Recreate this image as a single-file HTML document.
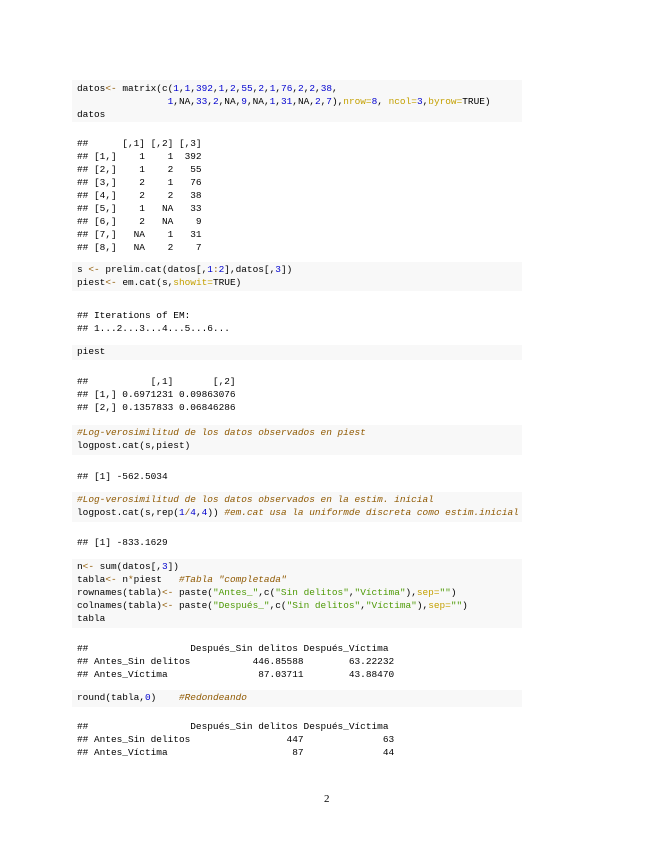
<!DOCTYPE html>
<html><head><meta charset="utf-8"><style>
body{margin:0;width:655px;height:848px;background:#fff;position:relative;overflow:hidden}
pre{margin:0;position:absolute;left:77px;font-family:"Liberation Mono",monospace;font-size:9.45px;line-height:13px;white-space:pre;color:#000}
.bg{position:absolute;left:72px;width:450px;background:#f8f8f8}
.n{color:#0000cf}.s{color:#4e9a06}.a{color:#c4a000}.o{color:#8f5902}.c{color:#8f5902;font-style:italic}
.pg{position:absolute;left:324px;top:793px;font-family:"Liberation Serif",serif;font-size:11px}
</style></head><body>
<div class="bg" style="top:80px;height:42px"></div>
<div class="bg" style="top:262px;height:29px"></div>
<div class="bg" style="top:345px;height:15px"></div>
<div class="bg" style="top:425px;height:30px"></div>
<div class="bg" style="top:492px;height:30px"></div>
<div class="bg" style="top:559px;height:69px"></div>
<div class="bg" style="top:690px;height:17px"></div>

<pre style="top:82px">datos<span class="o">&lt;-</span> matrix(c(<span class="n">1</span>,<span class="n">1</span>,<span class="n">392</span>,<span class="n">1</span>,<span class="n">2</span>,<span class="n">55</span>,<span class="n">2</span>,<span class="n">1</span>,<span class="n">76</span>,<span class="n">2</span>,<span class="n">2</span>,<span class="n">38</span>,
                <span class="n">1</span>,NA,<span class="n">33</span>,<span class="n">2</span>,NA,<span class="n">9</span>,NA,<span class="n">1</span>,<span class="n">31</span>,NA,<span class="n">2</span>,<span class="n">7</span>),<span class="a">nrow=</span><span class="n">8</span>, <span class="a">ncol=</span><span class="n">3</span>,<span class="a">byrow=</span>TRUE)
datos</pre>

<pre style="top:137px">##      [,1] [,2] [,3]
## [1,]    1    1  392
## [2,]    1    2   55
## [3,]    2    1   76
## [4,]    2    2   38
## [5,]    1   NA   33
## [6,]    2   NA    9
## [7,]   NA    1   31
## [8,]   NA    2    7</pre>

<pre style="top:263px">s <span class="o">&lt;-</span> prelim.cat(datos[,<span class="n">1</span><span class="o">:</span><span class="n">2</span>],datos[,<span class="n">3</span>])
piest<span class="o">&lt;-</span> em.cat(s,<span class="a">showit=</span>TRUE)</pre>

<pre style="top:309px">## Iterations of EM: 
## 1...2...3...4...5...6...</pre>

<pre style="top:345px">piest</pre>

<pre style="top:375px">##           [,1]       [,2]
## [1,] 0.6971231 0.09863076
## [2,] 0.1357833 0.06846286</pre>

<pre style="top:426px"><span class="c">#Log-verosimilitud de los datos observados en piest</span>
logpost.cat(s,piest)</pre>

<pre style="top:470px">## [1] -562.5034</pre>

<pre style="top:493px"><span class="c">#Log-verosimilitud de los datos observados en la estim. inicial</span>
logpost.cat(s,rep(<span class="n">1</span><span class="o">/</span><span class="n">4</span>,<span class="n">4</span>)) <span class="c">#em.cat usa la uniformde discreta como estim.inicial</span></pre>

<pre style="top:536px">## [1] -833.1629</pre>

<pre style="top:560px">n<span class="o">&lt;-</span> sum(datos[,<span class="n">3</span>])
tabla<span class="o">&lt;-</span> n<span class="o">*</span>piest   <span class="c">#Tabla "completada"</span>
rownames(tabla)<span class="o">&lt;-</span> paste(<span class="s">"Antes_"</span>,c(<span class="s">"Sin delitos"</span>,<span class="s">"Víctima"</span>),<span class="a">sep=</span><span class="s">""</span>)
colnames(tabla)<span class="o">&lt;-</span> paste(<span class="s">"Después_"</span>,c(<span class="s">"Sin delitos"</span>,<span class="s">"Víctima"</span>),<span class="a">sep=</span><span class="s">""</span>)
tabla</pre>

<pre style="top:642px">##                  Después_Sin delitos Después_Víctima
## Antes_Sin delitos           446.85588        63.22232
## Antes_Víctima                87.03711        43.88470</pre>

<pre style="top:691px">round(tabla,<span class="n">0</span>)    <span class="c">#Redondeando</span></pre>

<pre style="top:720px">##                  Después_Sin delitos Después_Víctima
## Antes_Sin delitos                 447              63
## Antes_Víctima                      87              44</pre>

<div class="pg">2</div>
</body></html>
